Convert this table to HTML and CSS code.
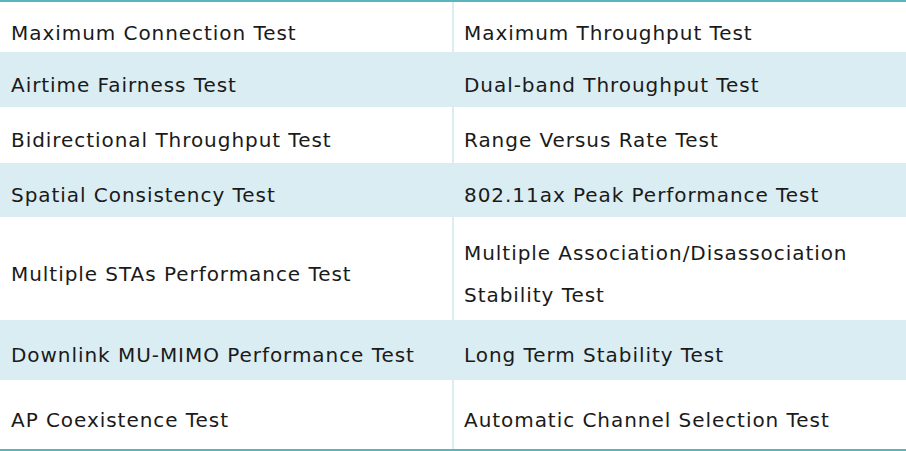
FILE: index.html
```html
<!DOCTYPE html>
<html>
<head>
<meta charset="utf-8">
<link rel="stylesheet" href="styles.css">
</head>
<body>
<div class="table">
  <div class="row r1"><div class="cell">Maximum Connection Test</div><div class="cell right">Maximum Throughput Test</div></div>
  <div class="row r2 alt"><div class="cell">Airtime Fairness Test</div><div class="cell right">Dual-band Throughput Test</div></div>
  <div class="row r3"><div class="cell">Bidirectional Throughput Test</div><div class="cell right">Range Versus Rate Test</div></div>
  <div class="row r4 alt"><div class="cell">Spatial Consistency Test</div><div class="cell right">802.11ax Peak Performance Test</div></div>
  <div class="row r5"><div class="cell">Multiple STAs Performance Test</div><div class="cell right">Multiple Association/Disassociation Stability Test</div></div>
  <div class="row r6 alt"><div class="cell">Downlink MU-MIMO Performance Test</div><div class="cell right">Long Term Stability Test</div></div>
  <div class="row r7"><div class="cell">AP Coexistence Test</div><div class="cell right">Automatic Channel Selection Test</div></div>
</div>
</body>
</html>
```
FILE: styles.css
```css
html, body {
  margin: 0;
  padding: 0;
  background: #ffffff;
}
.table {
  width: 906px;
  border-top: 2px solid #5ab4bd;
  border-bottom: 2px solid #5ab4bd;
  font-family: "DejaVu Sans", Verdana, sans-serif;
  font-size: 20px;
  letter-spacing: 0.95px;
  color: #1a1a1a;
}
.row {
  display: grid;
  grid-template-columns: 452px 1fr;
  background: #ffffff;
}
.row.alt {
  background: #daedf3;
}
.cell {
  display: flex;
  align-items: center;
  padding: 10px 10px 0 11px;
  line-height: 42px;
}
.cell.right {
  border-left: 2px solid #daedf3;
  padding-left: 10px;
}
.r1 { height: 50px; }
.r2 { height: 55px; }
.r3 { height: 56px; }
.r4 { height: 54px; }
.r5 { height: 103px; }
.r6 { height: 60px; }
.r7 { height: 69px; }
```
